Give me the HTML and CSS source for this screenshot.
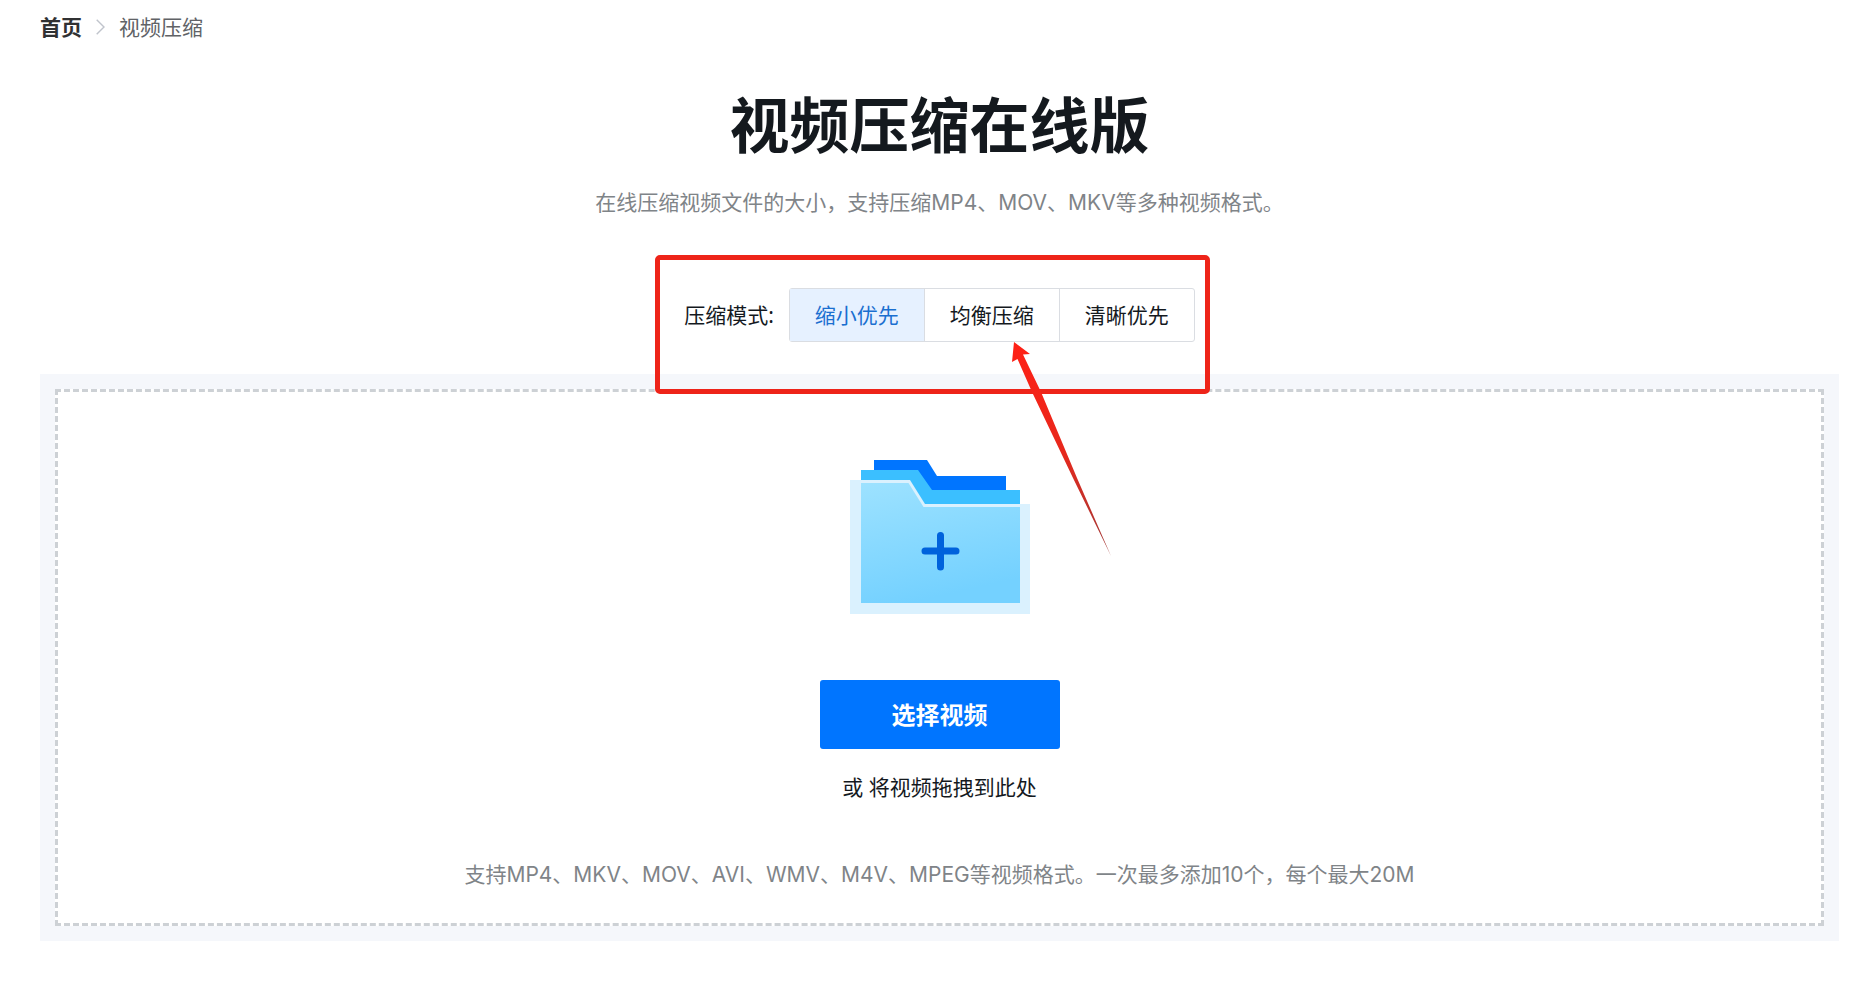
FILE: index.html
```html
<!DOCTYPE html>
<html lang="zh-CN">
<head>
  <meta charset="UTF-8">
  <meta name="viewport" content="width=device-width, initial-scale=1">
  <title>视频压缩在线版</title>
  <link rel="stylesheet" href="styles.css">
</head>
<body>

  <!-- Breadcrumb -->
  <nav class="breadcrumb">
    <a class="home" href="#">首页</a>
    <svg width="9" height="16" viewBox="0 0 9 16" fill="none" stroke="#c0c4cc" stroke-width="1.4"><path d="M.7 .7 8 8 .7 15.3"/></svg>
    <span>视频压缩</span>
  </nav>

  <main>
    <h1>视频压缩在线版</h1>
    <p class="subtitle">在线压缩视频文件的大小，支持压缩MP4、MOV、MKV等多种视频格式。</p>

    <!-- Compression mode -->
    <div class="mode" role="radiogroup" aria-labelledby="modeLabel">
      <span class="mode-label" id="modeLabel">压缩模式:</span>
      <div class="mode-group">
        <input type="radio" name="mode" id="modeSmall" checked>
        <label for="modeSmall">缩小优先</label>
        <input type="radio" name="mode" id="modeBalanced">
        <label for="modeBalanced">均衡压缩</label>
        <input type="radio" name="mode" id="modeClear">
        <label for="modeClear">清晰优先</label>
      </div>
      <div class="highlight"></div>
      <svg class="arrow" width="100" height="215" viewBox="0 0 100 215">
        <defs>
          <linearGradient id="arrowFill" x1="0" y1="0" x2="0" y2="1">
            <stop offset="0" stop-color="#ff2015"/>
            <stop offset=".5" stop-color="#e8281c"/>
            <stop offset="1" stop-color="#a03a38"/>
          </linearGradient>
        </defs>
        <path d="M2 0 18 12 11 12.500 29 50 65 136 99 214 61 136 20 50 5.500 17 0 20Z" fill="url(#arrowFill)"/>
      </svg>
    </div>

    <!-- Upload area -->
    <section class="upload">
      <div class="drop-zone">
        <svg class="folder" width="180" height="154" viewBox="0 0 180 154">
          <defs>
            <linearGradient id="folderFill" x1="0" y1="0" x2=".3" y2="1">
              <stop offset="0" stop-color="#9de2ff"/>
              <stop offset="1" stop-color="#74d1ff"/>
            </linearGradient>
          </defs>
          <path d="M24 0H77L87 16H156V40H24Z" fill="#0075ff"/>
          <path d="M11 10H68L82 30H170V60H11Z" fill="#3bbfff"/>
          <path d="M0 20H60L75 44H180V154H0Z" fill="#daf1fe"/>
          <path d="M11 23H58.500L73.500 47H170V143H11Z" fill="url(#folderFill)"/>
          <path d="M90.500 75.500V107M75 91H106" stroke="#0062dc" stroke-width="7" stroke-linecap="round"/>
        </svg>
        <button type="button" class="select-btn">选择视频</button>
        <p class="drop-text">或 将视频拖拽到此处</p>
        <p class="formats">支持MP4、MKV、MOV、AVI、WMV、M4V、MPEG等视频格式。一次最多添加10个，每个最大20M</p>
      </div>
    </section>
  </main>

</body>
</html>
```

FILE: styles.css
```css
* { box-sizing: border-box; }

body {
  margin: 0;
  padding: 12px 12px 40px 40px;
  font-family: "Noto Sans", "Noto Sans CJK SC", sans-serif;
  font-size: 21px;
  line-height: 30px;
  color: #14191e;
  background: #fff;
}

h1, p { margin: 0; }

.breadcrumb {
  display: flex;
  align-items: center;
  gap: 14px;
  color: #606266;
}

.breadcrumb .home {
  color: #303133;
  font-weight: 700;
  text-decoration: none;
}

main {
  display: flex;
  flex-direction: column;
  align-items: center;
}

h1 {
  margin-top: 41px;
  font-size: 60px;
  line-height: 84px;
  font-weight: 700;
  color: #14191e;
}

.subtitle {
  margin-top: 21px;
}

.subtitle, .formats {
  font-family: Inter, "Noto Sans CJK SC", sans-serif;
  color: #7f8488;
}

/* mode switch */
.mode {
  position: relative;
  display: flex;
  align-items: center;
  gap: 15px;
  margin-top: 70px;
}

.mode-group {
  display: flex;
  border: 1px solid #dadde2;
  border-radius: 3px;
}

.mode-group input {
  position: absolute;
  opacity: 0;
}

.mode-group label {
  padding: 11px 25px;
  cursor: pointer;
}

.mode-group label + input + label { border-left: 1px solid #dadde2; }

.mode-group input:checked + label {
  background: #e6f1ff;
  color: #1a6fd0;
}

/* callout drawn over the page */
.highlight {
  position: absolute;
  top: -33px;
  right: -15px;
  bottom: -52px;
  left: -29px;
  border: 5px solid #ee2419;
  border-radius: 5px;
  pointer-events: none;
}

.arrow {
  position: absolute;
  top: 54px;
  right: 83px;
  pointer-events: none;
}

/* upload */
.upload {
  align-self: stretch;
  margin-top: 32px;
  padding: 15px;
  background: #f5f7fb;
}

.drop-zone {
  display: flex;
  flex-direction: column;
  align-items: center;
  padding: 68px 20px 33px;
  border: 3px dashed #cdd1d5;
  background: #fff;
}

.select-btn {
  width: 240px;
  margin-top: 66px;
  padding: 18px 0;
  border: none;
  border-radius: 3px;
  background: #0075ff;
  color: #fff;
  font-family: inherit;
  font-size: 24px;
  line-height: 33px;
  font-weight: 700;
  cursor: pointer;
}

.drop-text { margin-top: 23px; }

.formats { margin-top: 58px; }
```
